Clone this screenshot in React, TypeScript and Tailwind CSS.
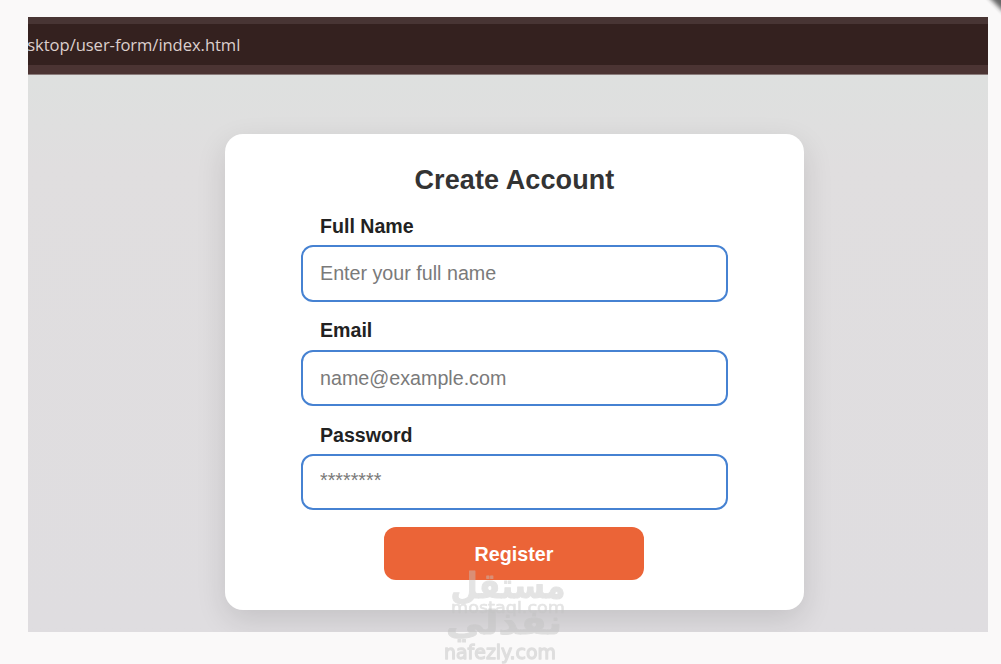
import React from 'react';

const FIELDS = [
  { id: 'name', label: 'Full Name', type: 'text', placeholder: 'Enter your full name', pad: 'pt-0' },
  { id: 'email', label: 'Email', type: 'email', placeholder: 'name@example.com', pad: 'pt-[1px]' },
  { id: 'password', label: 'Password', type: 'password', placeholder: '********', pad: 'pb-[3px]' },
];

const AddressBar: React.FC = () => (
  <div className="h-[58px] shrink-0 border-t-[7px] border-[#483534] bg-[#34211f] flex flex-col">
    <div className="h-[41px] flex items-center overflow-hidden">
      <span className="-ml-[10px] whitespace-nowrap font-['Open_Sans',sans-serif] text-[16.6px] leading-[22px] tracking-[-0.06px] text-[#dccfcd]">
        esktop/user-form/index.html
      </span>
    </div>
    <div className="h-[10px] bg-[#4b3433] border-b border-[#8a7c7b]" />
  </div>
);

const Watermark: React.FC = () => (
  <svg
    className="absolute left-[440px] top-[560px] pointer-events-none"
    width="134"
    height="104"
    viewBox="0 0 134 104"
    fill="#c4c4c4"
    stroke="#c4c4c4"
    strokeLinejoin="round"
    textAnchor="middle"
  >
    <g opacity="0.45" fontFamily="DejaVu Sans, sans-serif">
      <text x="68" y="38" fontSize="35" fontWeight="bold" strokeWidth="1" textLength="115" lengthAdjust="spacingAndGlyphs">
        مستقل
      </text>
      <text x="68" y="53" fontSize="15" strokeWidth="0.6" textLength="114" lengthAdjust="spacingAndGlyphs">
        mostaql.com
      </text>
    </g>
    <g opacity="0.5" fontFamily="DejaVu Sans, sans-serif">
      <text x="64" y="74" fontSize="33" fontWeight="bold" strokeWidth="1" textLength="116" lengthAdjust="spacingAndGlyphs">
        نفذلي
      </text>
      <text x="60" y="99" fontSize="19" strokeWidth="1.3" textLength="112" lengthAdjust="spacingAndGlyphs">
        nafezly.com
      </text>
    </g>
  </svg>
);

const App: React.FC = () => {
  return (
    <div className="relative w-[1001px] h-[664px] overflow-hidden bg-[#faf9f9] pt-[17px] pl-[28px] font-['Liberation_Sans',Arial,sans-serif]">
      <div className="w-[960px] h-[615px] overflow-hidden flex flex-col bg-linear-to-b from-[#dee0df] from-10% via-[#e0dedf] via-25% to-[#dfdde0]">
        <AddressBar />

        <main className="pt-[59px] pl-[197px]">
          <div className="w-[579px] h-[476px] rounded-[18px] bg-white shadow-[0_10px_30px_rgba(0,0,0,0.12)] flex flex-col items-center pt-[30px]">
            <h1 className="text-[27px] leading-[32px] font-bold tracking-[0.1px] text-[#333333]">
              Create Account
            </h1>

            <form className="w-[427px] mt-[18px] flex flex-col items-center" onSubmit={(e) => e.preventDefault()}>
              {FIELDS.map((field) => (
                <div key={field.id} className="w-full h-[104.3px] flex flex-col">
                  <label
                    htmlFor={field.id}
                    className="pl-[19px] mb-[7.3px] text-[19.6px] leading-[24px] font-bold text-[#222222]"
                  >
                    {field.label}
                  </label>
                  <input
                    id={field.id}
                    type={field.type}
                    placeholder={field.placeholder}
                    className={`w-full h-[56.5px] rounded-[12px] border-2 border-[#4682d2] bg-white px-[17px] text-[19.7px] text-[#222222] placeholder:text-[#7a7a7a] outline-none ${field.pad}`}
                  />
                </div>
              ))}

              <button
                type="submit"
                className="mr-[1px] pt-[2px] w-[260px] h-[53px] rounded-[12px] bg-[#eb6437] text-[19.7px] font-bold text-white"
              >
                Register
              </button>
            </form>
          </div>
        </main>
      </div>

      <Watermark />

      {/* Dark edge peeking in at the top right corner */}
      <div className="absolute -top-[11px] left-[985px] w-[30px] h-[16px] rotate-45 bg-[#666666] blur-[2px]" />
    </div>
  );
};

export default App;
